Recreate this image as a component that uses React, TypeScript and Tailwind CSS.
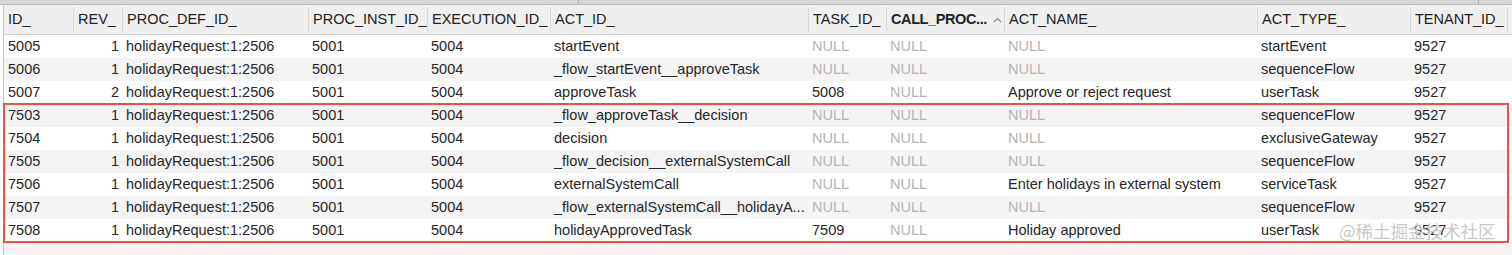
import React from "react";

const cols = [
  { name: "ID_", w: 69 },
  { name: "REV_", w: 49, right: true },
  { name: "PROC_DEF_ID_", w: 186 },
  { name: "PROC_INST_ID_", w: 119 },
  { name: "EXECUTION_ID_", w: 123 },
  { name: "ACT_ID_", w: 258 },
  { name: "TASK_ID_", w: 78 },
  { name: "CALL_PROC...", w: 118, sorted: true },
  { name: "ACT_NAME_", w: 253 },
  { name: "ACT_TYPE_", w: 153 },
  { name: "TENANT_ID_", w: 97 },
];

type Row = (string | null)[];

const rows: Row[] = [
  ["5005", "1", "holidayRequest:1:2506", "5001", "5004", "startEvent", null, null, null, "startEvent", "9527"],
  ["5006", "1", "holidayRequest:1:2506", "5001", "5004", "_flow_startEvent__approveTask", null, null, null, "sequenceFlow", "9527"],
  ["5007", "2", "holidayRequest:1:2506", "5001", "5004", "approveTask", "5008", null, "Approve or reject request", "userTask", "9527"],
  ["7503", "1", "holidayRequest:1:2506", "5001", "5004", "_flow_approveTask__decision", null, null, null, "sequenceFlow", "9527"],
  ["7504", "1", "holidayRequest:1:2506", "5001", "5004", "decision", null, null, null, "exclusiveGateway", "9527"],
  ["7505", "1", "holidayRequest:1:2506", "5001", "5004", "_flow_decision__externalSystemCall", null, null, null, "sequenceFlow", "9527"],
  ["7506", "1", "holidayRequest:1:2506", "5001", "5004", "externalSystemCall", null, null, "Enter holidays in external system", "serviceTask", "9527"],
  ["7507", "1", "holidayRequest:1:2506", "5001", "5004", "_flow_externalSystemCall__holidayA...", null, null, null, "sequenceFlow", "9527"],
  ["7508", "1", "holidayRequest:1:2506", "5001", "5004", "holidayApprovedTask", "7509", null, "Holiday approved", "userTask", "9527"],
];

const grid =
  "grid grid-cols-[69px_49px_186px_119px_123px_258px_78px_118px_253px_153px_97px_1fr]";

function DataRow({ row, idx }: { row: Row; idx: number }) {
  const bg = idx % 2 === 0 ? "bg-white" : "bg-[#f4f4f4]";
  return (
    <div className={`${grid} h-[23px] items-center ${bg}`}>
      {row.map((v, i) => (
        <div
          key={i}
          className={`whitespace-nowrap ${
            cols[i].right ? "text-right pr-[3px]" : "pl-[4px]"
          } ${v === null ? "text-[#b4b4b4]" : "text-[#262626]"}`}
        >
          {v === null ? "NULL" : v}
        </div>
      ))}
      <div />
    </div>
  );
}

export default function App() {
  return (
    <div
      className="relative w-[1512px] h-[255px] overflow-hidden bg-white text-[14.5px] leading-none"
      style={{ fontFamily: '"Liberation Sans", Arial, sans-serif' }}
    >
      {/* top strip */}
      <div className="relative h-[5px] bg-[#d6d6d6] border-b border-[#bcbcbc]">
        <div className="absolute left-[578px] top-0 h-full w-px bg-[#b5b5b5]" />
        <div className="absolute left-[1478px] top-0 h-full w-px bg-[#b5b5b5]" />
      </div>
      <div className="ml-[3px] border-l border-[#c4c4c4]">
        {/* header */}
        <div className={`${grid} h-[30px] items-center bg-[#efefef] border-b border-[#d2d2d2]`}>
          {cols.map((c, i) => (
            <div
              key={c.name}
              className={`flex items-center h-[25px] pl-[4px] whitespace-nowrap text-[#222] ${
                i > 0 ? "border-l border-[#d6d6d6]" : ""
              } ${c.sorted ? "font-bold tracking-[-0.4px]" : ""}`}
            >
              <span>{c.name}</span>
              {c.sorted && (
                <svg width="9" height="6" viewBox="0 0 9 6" className="ml-[6px] shrink-0">
                  <path d="M1 5 L4.5 1.5 L8 5" fill="none" stroke="#8a8a8a" strokeWidth="1.2" />
                </svg>
              )}
            </div>
          ))}
          <div className="h-[25px] border-l border-[#d6d6d6]" />
        </div>
        {/* rows */}
        {rows.slice(0, 3).map((r, i) => (
          <DataRow key={i} row={r} idx={i} />
        ))}
        <div className="relative">
          {rows.slice(3).map((r, i) => (
            <DataRow key={i + 3} row={r} idx={i + 3} />
          ))}
          <div className="absolute -left-[1px] top-[-1px] w-[1506px] bottom-[-1px] border-2 border-[#e0564b] pointer-events-none" />
        </div>
        <div className="h-[23px] bg-[#f4f4f4]" />
      </div>
      {/* watermark */}
      <div
        className="absolute left-[1339px] top-[222px] text-[17.5px] text-[#c9c9c9] whitespace-nowrap"
        style={{ fontFamily: '"Noto Sans CJK SC", "Liberation Sans", sans-serif', textShadow: "0 0 1px rgba(255,255,255,0.9)" }}
      >
        @稀土掘金技术社区
      </div>
    </div>
  );
}
